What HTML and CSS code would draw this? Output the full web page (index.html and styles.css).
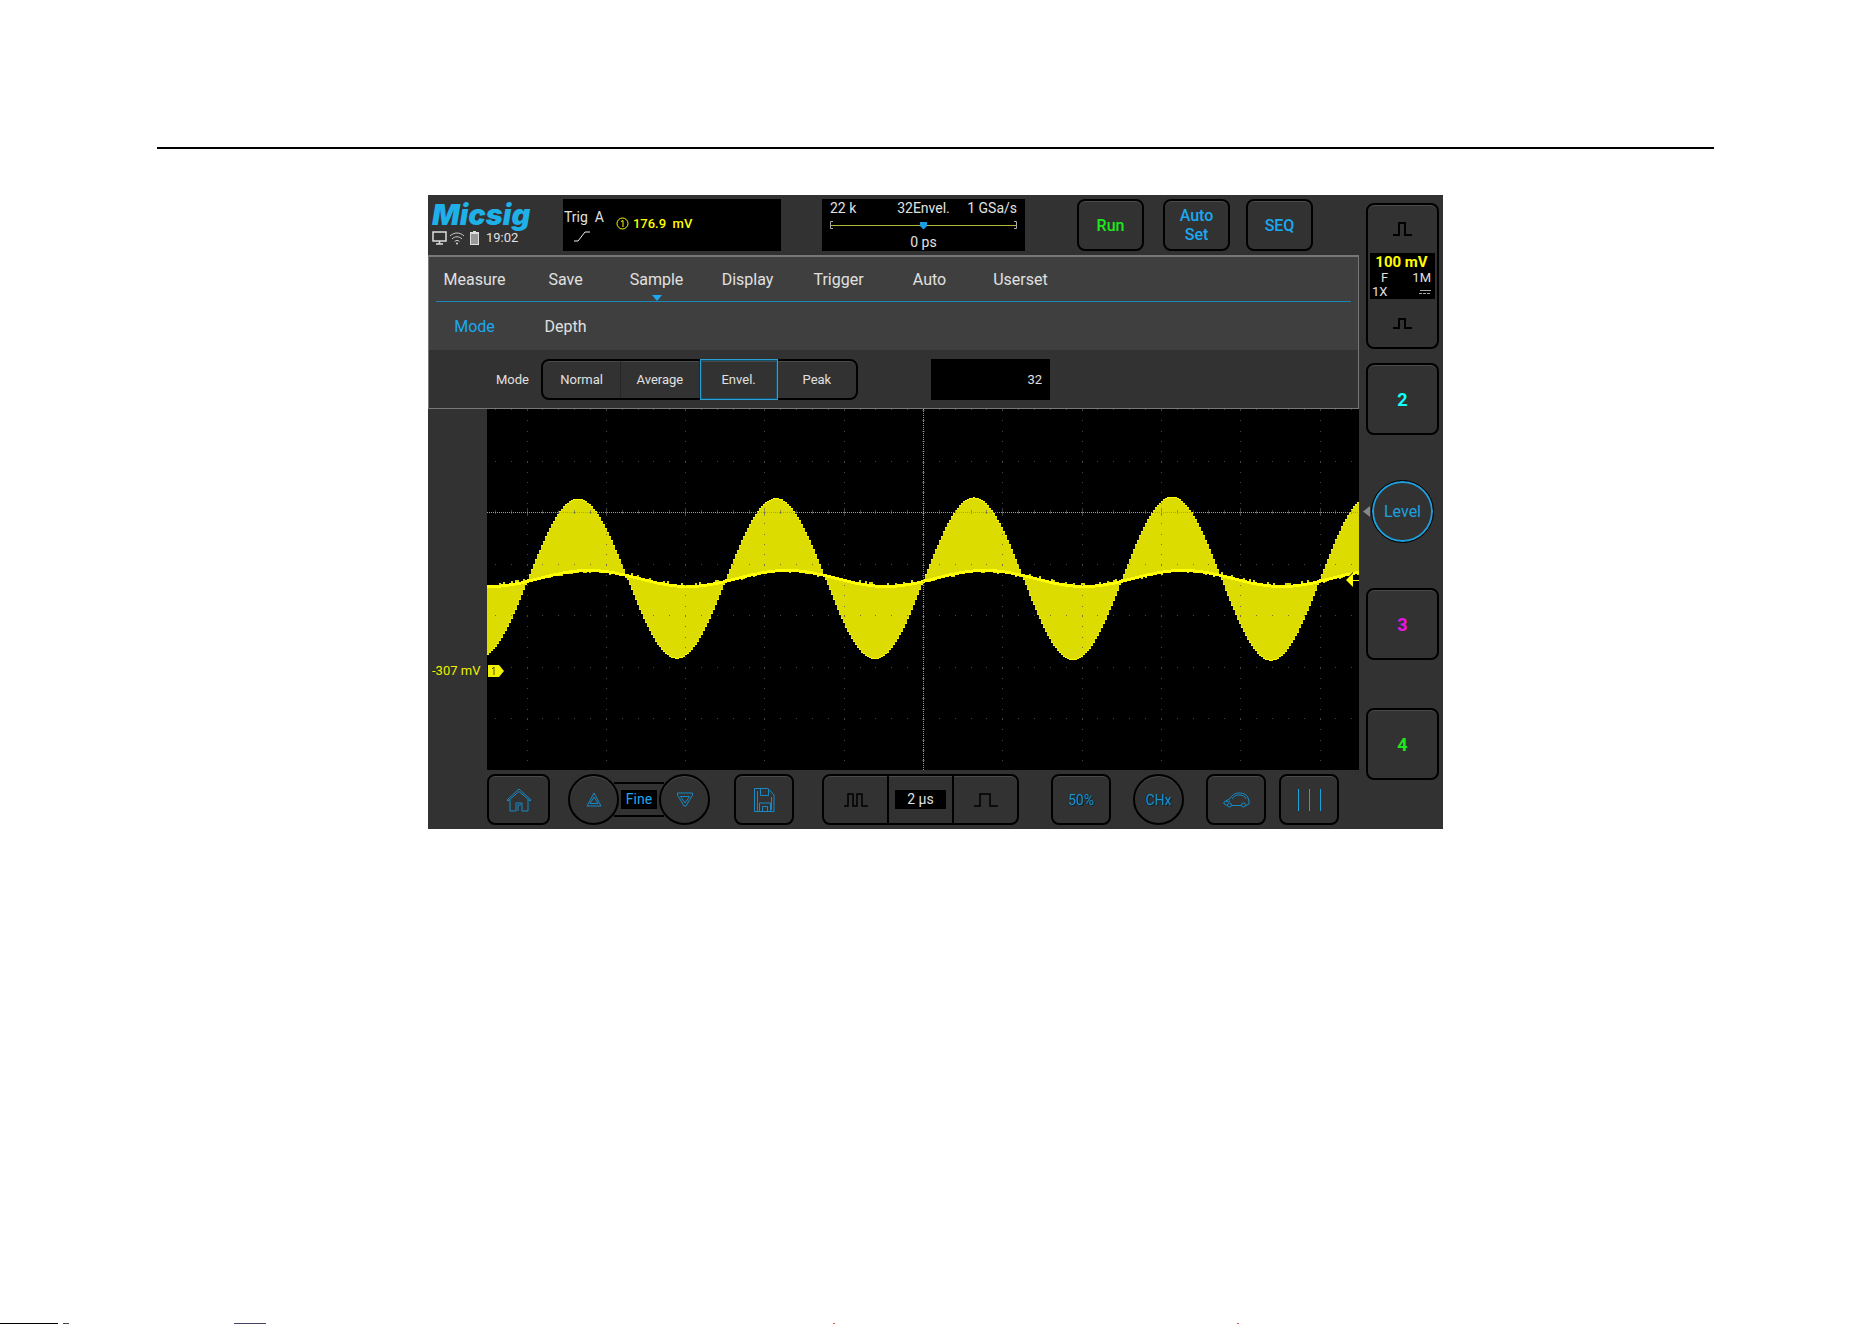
FILE: index.html
```html
<!DOCTYPE html>
<html lang="en">
<head>
  <meta charset="UTF-8">
  <title>Micsig Oscilloscope</title>
  <link rel="stylesheet" href="styles.css">
</head>
<body>
  <header class="page-rule"></header>

  <main class="scope">
    <div class="main-col">
      <!-- Top bar -->
      <div class="top-bar">
        <div class="brand">
          <div class="logo">Micsig</div>
          <div class="status">
            <svg width="15" height="14" viewBox="0 0 15 14"><path d="M1 1h13v9H1zM7.500 10v3M4 13h7" fill="none" stroke="#ddd" stroke-width="1.500"/></svg>
            <svg width="16" height="14" viewBox="0 0 16 14"><path d="M1 5c4-4 10-4 14 0M3 8c3-3 7-3 10 0M5.500 10.500c2-1.500 3-1.500 5 0" fill="none" stroke="#ccc"/><circle cx="8" cy="12.500" r="1" fill="#ddd"/></svg>
            <svg class="battery" width="9" height="14" viewBox="0 0 9 14"><path d="M3 0h3v1h3v13H0V1h3z" fill="#ddd"/><path d="M1 3h7v10H1z" fill="#999"/></svg>
            <span>19:02</span>
          </div>
        </div>

        <div class="trig-box">
          <div class="trig-source">
            <span>Trig&nbsp; A</span>
            <svg width="16" height="11" viewBox="0 0 16 11"><path d="M0 10h4l7-9h5" fill="none" stroke="#eee"/></svg>
          </div>
          <div class="trig-level">
            <svg width="13" height="13" viewBox="0 0 13 13"><circle cx="6.500" cy="6.500" r="5.500" fill="none" stroke="#ff0"/><path d="M5 4.500l2-1v6.500" fill="none" stroke="#ff0"/></svg>
            <span>176.9&nbsp; mV</span>
          </div>
        </div>

        <div class="time-box">
          <div class="time-row"><span>22 k</span><span>32Envel.</span><span>1 GSa/s</span></div>
          <svg class="time-line" width="100%" height="10" viewBox="0 0 187 10" preserveAspectRatio="none"><path d="M3 1.500H.5v7H3M184 1.500h2.500v7H184" fill="none" stroke="#aaa"/><path d="M1 5.500h185" stroke="#b4b43c"/><path d="M90 2h7v4l-3.500 3.500L90 6z" fill="#1a9fe0"/></svg>
          <div class="time-offset">0 ps</div>
        </div>

        <button class="key top-key run">Run</button>
        <button class="key top-key auto-set">Auto<br>Set</button>
        <button class="key top-key">SEQ</button>
      </div>

      <!-- Menu -->
      <div class="menu">
        <nav class="tabs">
          <button>Measure</button>
          <button>Save</button>
          <button class="active">Sample</button>
          <button>Display</button>
          <button>Trigger</button>
          <button>Auto</button>
          <button>Userset</button>
        </nav>
        <nav class="tabs sub-tabs">
          <button class="selected">Mode</button>
          <button>Depth</button>
        </nav>
        <div class="options">
          <span class="options-label" id="modeLabel">Mode</span>
          <div class="segments" role="radiogroup" aria-labelledby="modeLabel">
            <label><input type="radio" name="mode"><span>Normal</span></label>
            <label><input type="radio" name="mode"><span>Average</span></label>
            <label><input type="radio" name="mode" checked><span>Envel.</span></label>
            <label><input type="radio" name="mode"><span>Peak</span></label>
          </div>
          <input class="count" type="text" value="32" aria-label="Envelope count">
        </div>
      </div>

      <!-- Waveform -->
      <div class="wave-row">
        <div class="gutter">-307 mV</div>
        <div class="plot">
          <svg id="plot" viewBox="0 0 872 361" preserveAspectRatio="none"></svg>
          <svg class="ch-marker" width="16" height="12" viewBox="0 0 16 12"><path d="M0 0h11l5 6-5 6H0z" fill="#f0f000"/><path d="M4 4l2-2v8" fill="none" stroke="#555500"/></svg>
          <svg class="level-marker" width="14" height="16" viewBox="0 0 14 16"><path d="M0 8l8-8v16z" fill="#000"/><path d="M1 8l7-7v14z" fill="#ff0"/><path d="M8 8.500h6" stroke="#ff0"/></svg>
        </div>
      </div>

      <!-- Bottom bar -->
      <div class="bottom-bar">
        <button class="key home" aria-label="Home">
          <svg width="26" height="24" viewBox="0 0 26 24"><path d="M1 12L13 1l12 11-1 1L13 3.500 2 13zM4 11.500V23h6v-8h6v8h6V11.500M12 23v-6h3" fill="none" stroke="#178ac6"/></svg>
        </button>
        <div class="fine">
          <button class="key round" aria-label="Up"><svg width="16" height="15" viewBox="0 0 16 15"><path d="M8 1L15 14H1zM8 5l4 6.500H4z" fill="none" stroke="#178ac6"/></svg></button>
          <div class="fine-link"><span>Fine</span></div>
          <button class="key round" aria-label="Down"><svg width="16" height="15" viewBox="0 0 16 15"><path d="M.5 1h15v2L9 14H7L.5 3zM3.500 4.500h9L8 11z" fill="none" stroke="#178ac6"/></svg></button>
        </div>
        <button class="key save" aria-label="Save">
          <svg width="21" height="24" viewBox="0 0 21 24"><path d="M.5.5h13.500l6 6.500v16.500H.5zM6.500 1v6.500h8V1M3.500 23V3M5.500 23v-8h11v8M8.500 23v-4.500h5V23M17.500 22V9" fill="none" stroke="#178ac6"/></svg>
        </button>
        <div class="timebase">
          <button aria-label="Zoom out"><svg width="24" height="14" viewBox="0 0 24 14"><path d="M0 13h4V1h5v12h4V1h5v12h6" fill="none" stroke="#000" stroke-width="1.500"/></svg></button>
          <div class="timebase-value"><span>2 µs</span></div>
          <button aria-label="Zoom in"><svg width="24" height="14" viewBox="0 0 24 14"><path d="M0 13h6V1h10v12h8" fill="none" stroke="#000" stroke-width="1.500"/></svg></button>
        </div>
        <button class="key half">50%</button>
        <button class="key round chx">CHx</button>
        <button class="key car" aria-label="Automotive">
          <svg width="27" height="16" viewBox="0 0 27 16"><path d="M4.500 13.500L1 12v-2l6-3.500C9 3 12 1 16 1c5 0 8 2 9 5l1 3v3l-3 1.500M9 13.500h9M9 7c2-3 4-4 7-4 4 0 6 1 7 4M3 9.500l4-.5" fill="none" stroke="#178ac6"/><circle cx="6.500" cy="13" r="2" fill="none" stroke="#178ac6"/><circle cx="20.500" cy="13" r="2" fill="none" stroke="#178ac6"/></svg>
        </button>
        <button class="key cursors" aria-label="Cursors">
          <svg width="24" height="22" viewBox="0 0 24 22"><path d="M1.500 0v22M12.500 0v22M23.500 0v22" stroke="#1ba0d8"/></svg>
        </button>
      </div>
    </div>

    <!-- Channels -->
    <aside class="side-col">
      <div class="key channel-one">
        <button aria-label="Scale up"><svg width="19" height="14" viewBox="0 0 19 14"><path d="M0 13h6V1h6v12h7" fill="none" stroke="#000" stroke-width="2"/></svg></button>
        <div class="channel-info">
          <strong>100 mV</strong>
          <div><span class="bandwidth">F</span><span>1M</span></div>
          <div><span>1X</span><svg width="12" height="6" viewBox="0 0 12 6"><path d="M1 1.500h11" stroke="#aaa"/><path d="M0 4.500h12" stroke="#aaa" stroke-dasharray="3 1"/></svg></div>
        </div>
        <button aria-label="Scale down"><svg width="19" height="11" viewBox="0 0 19 11"><path d="M0 10h6V1h6v9h7" fill="none" stroke="#000" stroke-width="2"/></svg></button>
      </div>
      <button class="key channel ch2">2</button>
      <div class="level-row">
        <svg width="7" height="11" viewBox="0 0 7 11"><path d="M0 5.500L7 0v11z" fill="#888"/></svg>
        <button class="level">Level</button>
      </div>
      <button class="key channel ch3">3</button>
      <button class="key channel ch4">4</button>
    </aside>
  </main>

  <footer class="page-edge"></footer>

  <script src="script.js"></script>
</body>
</html>
```
FILE: styles.css
```css
* {
  box-sizing: border-box;
}

body {
  margin: 0;
  min-height: 100vh;
  display: flex;
  flex-direction: column;
  background: #fff;
  font-family: Roboto, "Liberation Sans", sans-serif;
}

button {
  padding: 0;
  border: none;
  background: none;
  color: inherit;
  font-family: inherit;
  cursor: pointer;
}

svg {
  display: block;
}

.page-rule {
  margin: 147px 158px 46px 157px;
  border-top: 2px solid #000;
}

.scope {
  margin: 0 429px 0 428px;
  display: grid;
  grid-template-columns: 1fr 84px;
  background: #323232;
  color: #e0e0e0;
}

.main-col {
  min-width: 0;
}

.key {
  flex-shrink: 0;
  display: flex;
  align-items: center;
  justify-content: center;
  border: 2px solid #000;
  border-radius: 8px;
  box-shadow: inset 0 1px #4a4a4a;
}

/* Top bar */
.top-bar {
  height: 60px;
  padding-top: 4px;
  display: flex;
}

.brand {
  flex: 0 0 135px;
  padding-left: 4px;
}

.logo {
  color: #1fb0e8;
  font-family: Inter, sans-serif;
  font-size: 29px;
  font-weight: 900;
  font-style: italic;
  line-height: 31px;
}

.status {
  display: flex;
  align-items: center;
  gap: 2px;
  font-size: 13px;
  line-height: 16px;
}

.battery {
  margin: 0 5px 0 3px;
}

.trig-box,
.time-box {
  height: 52px;
  background: #000;
  font-size: 14px;
  line-height: 16px;
}

.trig-box {
  flex: 0 0 218px;
  display: flex;
  gap: 12px;
}

.trig-source {
  padding: 10px 0 0 1px;
}

.trig-source svg {
  margin: 6px 0 0 10px;
}

.trig-level {
  height: 49px;
  display: flex;
  align-items: center;
  gap: 4px;
  color: #ff0;
  font-size: 13px;
  font-weight: 500;
}

.time-box {
  flex: 0 0 203px;
  margin: 0 52px 0 41px;
  padding: 1px 8px;
}

.time-row {
  display: grid;
  grid-template-columns: 1fr auto 1fr;
}

.time-row span:last-child {
  text-align: right;
}

.time-line {
  margin: 4px 0;
}

.time-offset {
  text-align: center;
}

.top-key {
  width: 67px;
  height: 52px;
  margin-right: 16px;
  color: #1ba8f0;
  font-size: 16px;
  font-weight: 500;
  line-height: 19px;
}

.run {
  margin-right: 19px;
  color: #1de81d;
}

/* Menu */
.menu {
  border: 1px solid #777;
  border-top-width: 2px;
  background: #3f3f3f;
}

.tabs {
  height: 45px;
  margin: 0 7px;
  display: flex;
  border-bottom: 1px solid #1787b8;
}

.tabs button {
  position: relative;
  flex: 0 0 91px;
  left: -7px;
  color: #e0e0e0;
  font-size: 16px;
}

.tabs .active::after {
  content: "";
  position: absolute;
  left: 41px;
  bottom: 0;
  border: 5px solid transparent;
  border-top: 6px solid #1ba8f0;
  border-bottom: none;
}

.sub-tabs {
  height: 48px;
  border-bottom: none;
}

.tabs .selected {
  color: #1ba8f0;
}

.options {
  padding: 9px 0 8px 67px;
  display: flex;
  align-items: center;
  background: #323232;
  font-size: 13px;
}

.options-label {
  flex: 0 0 45px;
}

.segments {
  display: flex;
  width: 317px;
  height: 41px;
  border: 2px solid #000;
  border-radius: 8px;
  box-shadow: inset 0 1px #4a4a4a;
}

.segments label {
  flex: 1;
  display: flex;
}

.segments input {
  appearance: none;
  width: 0;
  margin: 0;
}

.segments span {
  flex: 1;
  display: flex;
  align-items: center;
  justify-content: center;
  border-right: 1px solid #262626;
}

.segments label:last-child span {
  border-right: none;
}

.segments input:checked + span {
  margin: -2px 0;
  border: 1px solid #2ba0d4;
  outline: 1px solid #14506c;
  outline-offset: -2px;
}

.count {
  width: 119px;
  height: 41px;
  margin-left: 73px;
  padding: 0 8px;
  border: none;
  background: #000;
  color: #e0e0e0;
  font-family: inherit;
  font-size: 13px;
  text-align: right;
}

/* Waveform */
.wave-row {
  display: flex;
  height: 361px;
}

.gutter {
  flex: 0 0 59px;
  padding: 254px 0 0 4px;
  color: #f0f000;
  font-size: 13px;
  line-height: 16px;
  white-space: nowrap;
}

.plot {
  position: relative;
  flex: 1;
  background: #000;
}

#plot {
  width: 100%;
  height: 100%;
}

.ch-marker {
  position: absolute;
  left: 1px;
  top: 256px;
}

.level-marker {
  position: absolute;
  right: 0;
  top: 163px;
}

/* Bottom bar */
.bottom-bar {
  height: 59px;
  padding: 4px 19px 0 59px;
  display: flex;
}

.bottom-bar .key {
  width: 60px;
  height: 51px;
  margin-right: 13px;
}

.bottom-bar .home {
  width: 63px;
  margin-right: 18px;
}

.bottom-bar .round {
  width: 51px;
  margin: 0;
  border-radius: 50%;
}

.fine {
  display: flex;
  align-items: center;
  height: 51px;
  margin-right: 24px;
}

.fine-link {
  width: 50px;
  height: 35px;
  margin: 0 -5px;
  display: flex;
  align-items: center;
  justify-content: center;
  border: 2px solid #000;
  border-width: 2px 0;
}

.fine-link span {
  padding: 0 5px;
  background: #000;
  color: #1ba8f0;
  font-size: 14px;
  line-height: 19px;
}

.bottom-bar .save {
  margin-right: 28px;
}

.timebase {
  width: 197px;
  height: 51px;
  margin-right: 32px;
  display: flex;
  border: 2px solid #000;
  border-radius: 8px;
  box-shadow: inset 0 1px #4a4a4a;
}

.timebase > * {
  flex: 1;
  display: flex;
  align-items: center;
  justify-content: center;
}

.timebase-value {
  border: 2px solid #000;
  border-width: 0 2px;
}

.timebase-value span {
  padding: 0 12px;
  background: #000;
  font-size: 14px;
  line-height: 19px;
}

.half,
.chx {
  color: #1f94cc;
  font-size: 14px;
  text-shadow: 1px 1px #0a2230, -1px 0 #0a2230;
}

.bottom-bar .half,
.bottom-bar .chx {
  margin-right: 22px;
}

.bottom-bar .cursors {
  margin-right: 0;
}

/* Channels */
.side-col {
  padding: 8px 4px 0 7px;
}

.channel-one {
  height: 146px;
  flex-direction: column;
  align-items: stretch;
}

.channel-one button {
  flex: 1;
  display: flex;
  align-items: center;
  justify-content: center;
}

.channel-info {
  height: 46px;
  margin: 0 2px;
  padding: 1px 4px 0 2px;
  background: #000;
  font-size: 13px;
  line-height: 14px;
}

.channel-info strong {
  display: block;
  color: #ff0;
  font-size: 15px;
  line-height: 17px;
  text-align: center;
}

.channel-info div {
  display: flex;
  align-items: center;
  justify-content: space-between;
}

.bandwidth {
  padding-left: 9px;
}

.channel {
  width: 100%;
  height: 72px;
  font-size: 18px;
  font-weight: 700;
}

.ch2 {
  margin-top: 14px;
  color: #1ff;
}

.ch3 {
  color: #e815e8;
}

.ch4 {
  margin-top: 48px;
  color: #1de81d;
}

.level-row {
  height: 153px;
  margin-left: -3px;
  display: flex;
  align-items: center;
  gap: 2px;
}

.level {
  width: 61px;
  height: 61px;
  border: 2px solid #1ba0e0;
  border-radius: 50%;
  outline: 1px solid #000;
  color: #1ba0e0;
  font-size: 16px;
}

.page-edge {
  height: 1px;
  margin-top: auto;
  background: linear-gradient(to right, #000 58px, #fff 58px, #fff 63px, #444 63px, #444 69px, #fff 69px, #fff 234px, #446 234px, #446 266px, #fff 266px, #fff 833px, #e44 833px, #e44 835px, #fff 835px, #fff 1237px, #e44 1237px, #e44 1239px, #fff 1239px);
}
```
FILE: script.js
```js
const plot = document.getElementById("plot");
const NS = "http://www.w3.org/2000/svg";
const W = 872;
const H = 361;

function addPath(d, attrs) {
  const path = document.createElementNS(NS, "path");
  path.setAttribute("d", d);
  path.setAttribute("fill", "none");
  for (const name in attrs) path.setAttribute(name, attrs[name]);
  plot.appendChild(path);
}

// signal envelope and the small residual sine
function big(x) {
  return 169 - (79 + x / 300) * Math.cos((x - 90) / 198 * 2 * Math.PI);
}
function small(x) {
  return 169 - 8 * Math.cos((x - 101) / 198 * 2 * Math.PI);
}

function noise(x) {
  return Math.abs(Math.sin(x * 12.9898) * 43758.5453) % 1;
}

let fill = "";
let edge = "";
for (let x = 0; x < W; x += 2) {
  const a = big(x);
  const b = small(x);
  const spike = noise(x) > 0.8 ? 2 : 0;
  const above = a < b;
  const top = Math.round(Math.min(a, b - 1)) - (above ? 0 : spike);
  const bottom = Math.round(Math.max(a, b + 1)) + (above ? spike : 0);
  fill += `M${x} ${top}h2V${bottom}h-2z`;
  edge += `M${x} ${Math.round(b) - 1}h2v3h-2z`;
  edge += `M${x} ${Math.round(a)}h2v1h-2z`;
}
addPath(fill, { fill: "#dcdc00", "shape-rendering": "crispEdges" });
addPath(edge, { fill: "#ffff00", "shape-rendering": "crispEdges" });

// graticule: 11 visible columns, 6 rows
let dots = "";
let ticks = "";
for (let i = -5; i <= 5; i++) {
  const x = Math.round(436 + i * 79.3);
  for (let y = 1; y < H; y += 10.3) dots += `M${x} ${Math.round(y)}h1v1h-1z`;
}
for (let j = 1; j <= 6; j++) {
  const y = Math.round(j * 51.5);
  for (let i = -27; i <= 27; i++) dots += `M${Math.round(436 + i * 15.86)} ${y}h1v1h-1z`;
}
for (let i = -27; i <= 27; i++) {
  const x = Math.round(436 + i * 15.86);
  const r = i % 5 ? 2 : 4;
  ticks += `M${x} ${103 - r}h1v${r * 2}h-1zM${x} 0h1v1h-1z`;
}
for (let y = 1; y < H; y += 10.3) ticks += `M435 ${Math.round(y)}h3v1h-3z`;
addPath(dots, { fill: "#555", "fill-opacity": "0.8", "shape-rendering": "crispEdges" });
addPath(ticks, { fill: "#666", "fill-opacity": "0.6", "shape-rendering": "crispEdges" });
addPath(`M0 103.5H${W}M436.5 0V${H}`, { stroke: "#999", "stroke-dasharray": "1 1" });
```
